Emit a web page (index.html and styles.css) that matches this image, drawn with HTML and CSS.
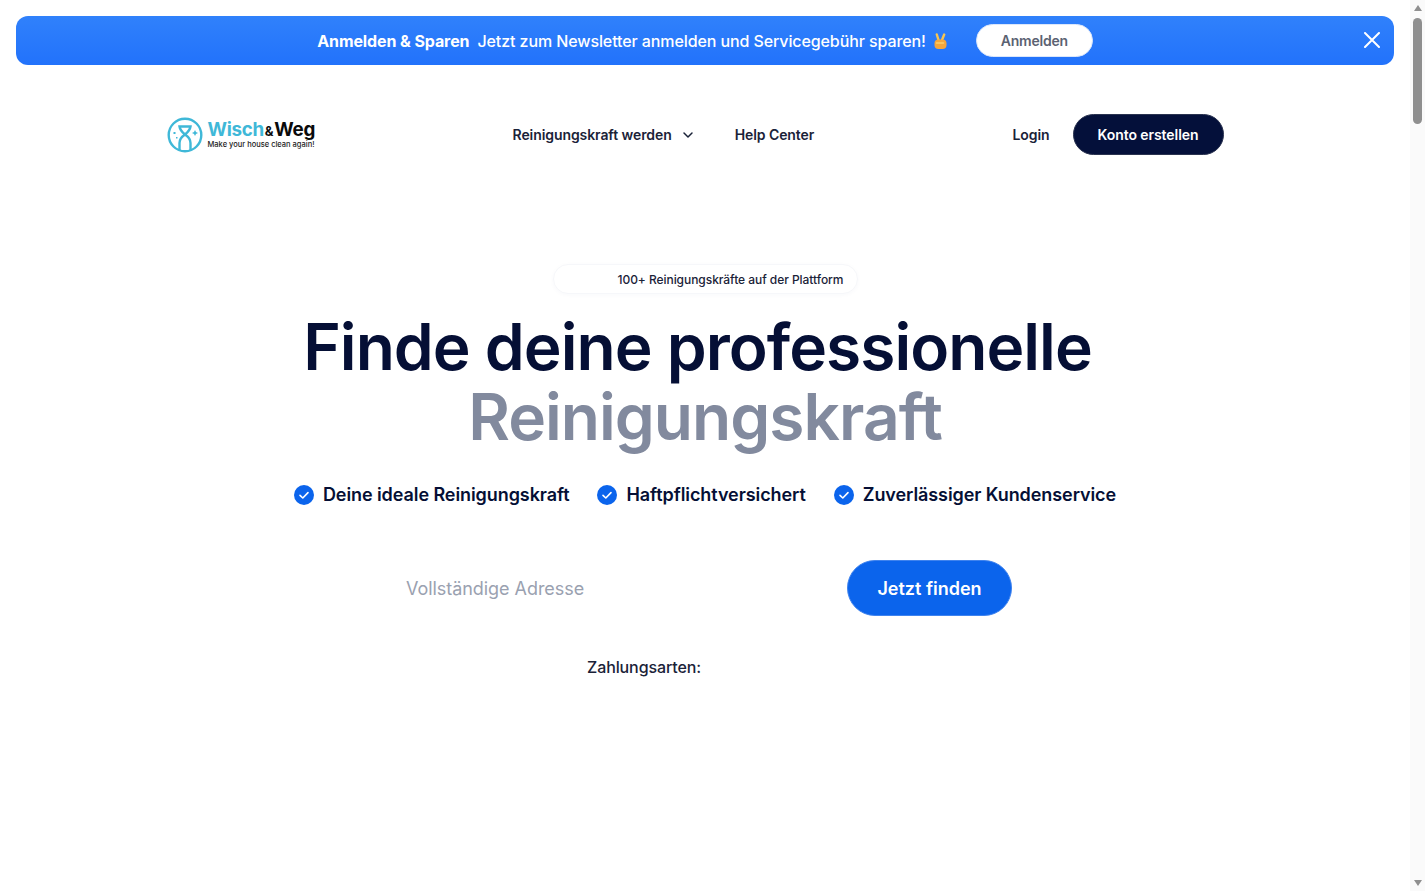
FILE: index.html
```html
<!DOCTYPE html>
<html lang="de">
<head>
  <meta charset="UTF-8">
  <title>Wisch&amp;Weg</title>
  <link rel="stylesheet" href="styles.css">
</head>
<body>
  <div class="page">
    <!-- Newsletter Banner -->
    <div class="banner">
      <div class="banner-content">
        <strong class="banner-title">Anmelden &amp; Sparen</strong>
        <span class="banner-text">Jetzt zum Newsletter anmelden und Servicegebühr sparen!</span>
        <svg class="banner-emoji" viewBox="0 0 15 16" aria-hidden="true">
          <path d="M5.500 7 3.800 1.500M9 7l2.200-5.500" fill="none" stroke="#f7c552" stroke-width="2.400" stroke-linecap="round"/>
          <rect x="1.500" y="6.500" width="12" height="9.500" rx="4" fill="#f5a63c"/>
          <path d="M3.500 10h7" fill="none" stroke="#fbd06a" stroke-width="1.600" stroke-linecap="round"/>
        </svg>
        <button class="banner-btn">Anmelden</button>
      </div>
      <svg class="banner-close" viewBox="0 0 16 16" aria-label="Schließen">
        <path d="M1 1l14 14M15 1L1 15" stroke="#fff" stroke-width="2" stroke-linecap="round"/>
      </svg>
    </div>

    <!-- Navigation -->
    <nav class="nav">
      <a class="logo">
        <svg class="logo-icon" viewBox="0 0 36 36" aria-hidden="true">
          <circle cx="18" cy="18" r="16.300" fill="none" stroke="#3fb8d8" stroke-width="2.400"/>
          <path d="M12.500 9.500h11c-.5 3.500-3 6-5.500 8-2.500-2-5-4.500-5.500-8zM18 17.500c3 2 5.500 4.500 5.500 8.500v7M18 17.500c-3 2-5.500 4.500-5.500 8.500v7" fill="none" stroke="#3fb8d8" stroke-width="2.400"/>
          <path d="M28 13l1 2 2 1-2 1-1 2-1-2-2-1 2-1zM6.500 15h2v2h-2zM9 20h1.500v1.500H9z" fill="#3fb8d8"/>
        </svg>
        <span class="logo-text">
          <span class="logo-name"><span class="logo-wisch">Wisch</span><span class="logo-amp">&amp;</span>Weg</span>
          <span class="logo-tag">Make your house clean again!</span>
        </span>
      </a>
      <div class="nav-links">
        <a class="nav-link">Reinigungskraft werden
          <svg class="chevron" viewBox="0 0 12 12" aria-hidden="true">
            <path d="M2 4l4 4 4-4" fill="none" stroke="#1a2238" stroke-width="1.500" stroke-linecap="round" stroke-linejoin="round"/>
          </svg>
        </a>
        <a class="nav-link">Help Center</a>
      </div>
      <div class="nav-actions">
        <a class="nav-link">Login</a>
        <button class="btn-dark">Konto erstellen</button>
      </div>
    </nav>

    <!-- Hero -->
    <main class="hero">
      <div class="badge">100+ Reinigungskräfte auf der Plattform</div>
      <h1 class="hero-title">
        <span class="title-first">Finde deine professionelle</span>
        <span class="title-second">Reinigungskraft</span>
      </h1>
      <ul class="checks">
        <li class="check">
          <svg class="check-icon" viewBox="0 0 20 20" aria-hidden="true"><circle cx="10" cy="10" r="10" fill="#0b64ec"/><path d="M6 10.300l2.800 2.700L14 7.600" fill="none" stroke="#fff" stroke-width="1.600" stroke-linecap="round" stroke-linejoin="round"/></svg>
          Deine ideale Reinigungskraft
        </li>
        <li class="check">
          <svg class="check-icon" viewBox="0 0 20 20" aria-hidden="true"><circle cx="10" cy="10" r="10" fill="#0b64ec"/><path d="M6 10.300l2.800 2.700L14 7.600" fill="none" stroke="#fff" stroke-width="1.600" stroke-linecap="round" stroke-linejoin="round"/></svg>
          Haftpflichtversichert
        </li>
        <li class="check">
          <svg class="check-icon" viewBox="0 0 20 20" aria-hidden="true"><circle cx="10" cy="10" r="10" fill="#0b64ec"/><path d="M6 10.300l2.800 2.700L14 7.600" fill="none" stroke="#fff" stroke-width="1.600" stroke-linecap="round" stroke-linejoin="round"/></svg>
          Zuverlässiger Kundenservice
        </li>
      </ul>
      <form class="search">
        <input class="search-input" type="text" placeholder="Vollständige Adresse">
        <button class="search-btn" type="button">Jetzt finden</button>
      </form>
      <div class="payment">Zahlungsarten:</div>
    </main>
  </div>

  <!-- Scrollbar -->
  <div class="scrollbar">
    <span class="arrow-up"></span>
    <span class="thumb"></span>
    <span class="arrow-down"></span>
  </div>
</body>
</html>
```

FILE: styles.css
```css
html, body {
  height: 100%;
  overflow: hidden;
}
body {
  margin: 0;
  display: flex;
  font-family: "Inter", sans-serif;
  background-color: #fff;
  color: #050f35;
}
a {
  color: inherit;
  text-decoration: none;
}
button {
  font-family: inherit;
  cursor: pointer;
}
.page {
  flex: 1;
  min-width: 0;
  padding-top: 16px;
}

/* Banner */
.banner {
  height: 49px;
  margin: 0 16px;
  display: flex;
  align-items: center;
  justify-content: center;
  position: relative;
  border-radius: 12px;
  background: linear-gradient(180deg, #3081fb 0%, #2272fb 100%);
  color: #fff;
  font-size: 16px;
  letter-spacing: -0.1px;
}
.banner-content {
  display: flex;
  align-items: center;
}
.banner-title {
  font-weight: 700;
  margin-right: 8px;
}
.banner-text {
  font-weight: 500;
}
.banner-emoji {
  width: 15px;
  height: 16px;
  margin-left: 7px;
}
.banner-btn {
  width: 117px;
  height: 33px;
  margin-left: 28px;
  border: 1px solid #dbe7fb;
  border-radius: 17px;
  background-color: #fff;
  color: #5b6272;
  font-size: 14px;
  font-weight: 600;
  letter-spacing: -0.2px;
}
.banner-close {
  position: absolute;
  right: 14px;
  top: 16px;
  width: 16px;
  height: 16px;
}

/* Nav */
.nav {
  width: 1057px;
  height: 41px;
  margin: 49px auto 0;
  display: flex;
  align-items: center;
  position: relative;
  left: -10px;
}
.logo {
  display: flex;
  align-items: center;
  gap: 5px;
  width: 346px;
}
.logo-icon {
  width: 36px;
  height: 36px;
}
.logo-text {
  display: flex;
  flex-direction: column;
}
.logo-name {
  font-size: 18.800px;
  line-height: 20px;
  font-weight: 700;
  color: #0a0a0a;
  letter-spacing: -0.3px;
}
.logo-wisch {
  color: #3fb8d8;
}
.logo-amp {
  font-size: 13px;
  margin: 0 1px;
}
.logo-tag {
  font-size: 7.500px;
  line-height: 8px;
  font-weight: 500;
  color: #222;
  white-space: nowrap;
}
.nav-links {
  display: flex;
  align-items: center;
  gap: 41px;
  flex: 1;
}
.nav-link {
  display: flex;
  align-items: center;
  gap: 10px;
  font-size: 14px;
  font-weight: 600;
  letter-spacing: -0.08px;
  color: #1a2238;
}
.chevron {
  width: 12px;
  height: 12px;
}
.nav-actions {
  display: flex;
  align-items: center;
  gap: 23px;
}
.btn-dark {
  width: 151px;
  height: 41px;
  border: 1px solid #2a3350;
  border-radius: 21px;
  background-color: #04103a;
  color: #fff;
  font-size: 14px;
  font-weight: 600;
  letter-spacing: -0.08px;
}

/* Hero */
.hero {
  display: flex;
  flex-direction: column;
  align-items: center;
  margin-top: 109px;
}
.badge {
  width: 305px;
  height: 30px;
  box-sizing: border-box;
  padding: 0 13px 0 64px;
  display: flex;
  align-items: center;
  white-space: nowrap;
  border: 1px solid #f6f7fa;
  border-radius: 15px;
  box-shadow: 0 1px 4px rgba(30, 60, 120, 0.03);
  font-size: 12px;
  font-weight: 500;
  letter-spacing: -0.05px;
  color: #1a2238;
}
.hero-title {
  margin: 18px 0 0;
  font-size: 64px;
  line-height: 70px;
  font-weight: 600;
  letter-spacing: -0.96px;
  text-align: center;
}
.title-first {
  display: block;
  padding-right: 15px;
}
.title-second {
  display: block;
  color: #828a9e;
}
.checks {
  list-style: none;
  margin: 29px 0 0;
  padding: 0;
  display: flex;
  gap: 28px;
}
.check {
  display: flex;
  align-items: center;
  gap: 9px;
  font-size: 18px;
  line-height: 28px;
  font-weight: 600;
  letter-spacing: -0.08px;
}
.check-icon {
  width: 20px;
  height: 20px;
}
.search {
  width: 614px;
  margin-top: 51px;
  display: flex;
  align-items: center;
  justify-content: space-between;
}
.search-input {
  flex: 1;
  min-width: 0;
  padding: 0 8px;
  border: 0;
  outline: 0;
  background: transparent;
  font-family: inherit;
  font-size: 18px;
  letter-spacing: -0.05px;
}
.search-input::placeholder {
  color: #9aa1b0;
}
.search-btn {
  width: 165px;
  height: 56px;
  border: 1px solid #3f83ee;
  border-radius: 28px;
  background-color: #0b64ec;
  color: #fff;
  font-size: 18px;
  font-weight: 600;
}
.payment {
  width: 236px;
  margin-top: 41px;
  font-size: 16px;
  line-height: 20px;
  font-weight: 500;
  letter-spacing: -0.1px;
  color: #1a2238;
}

/* Scrollbar */
.scrollbar {
  width: 15px;
  flex: none;
  display: flex;
  flex-direction: column;
  align-items: center;
  background-color: #fafafa;
}
.arrow-up,
.arrow-down {
  width: 0;
  height: 0;
  border-left: 4px solid transparent;
  border-right: 4px solid transparent;
}
.arrow-up {
  margin-top: 5px;
  border-bottom: 6px solid #8f8f8f;
}
.arrow-down {
  margin-top: auto;
  margin-bottom: 5px;
  border-top: 6px solid #8f8f8f;
}
.thumb {
  width: 9px;
  height: 106px;
  margin-top: 7px;
  border-radius: 5px;
  background-color: #8f8f8f;
}
```
